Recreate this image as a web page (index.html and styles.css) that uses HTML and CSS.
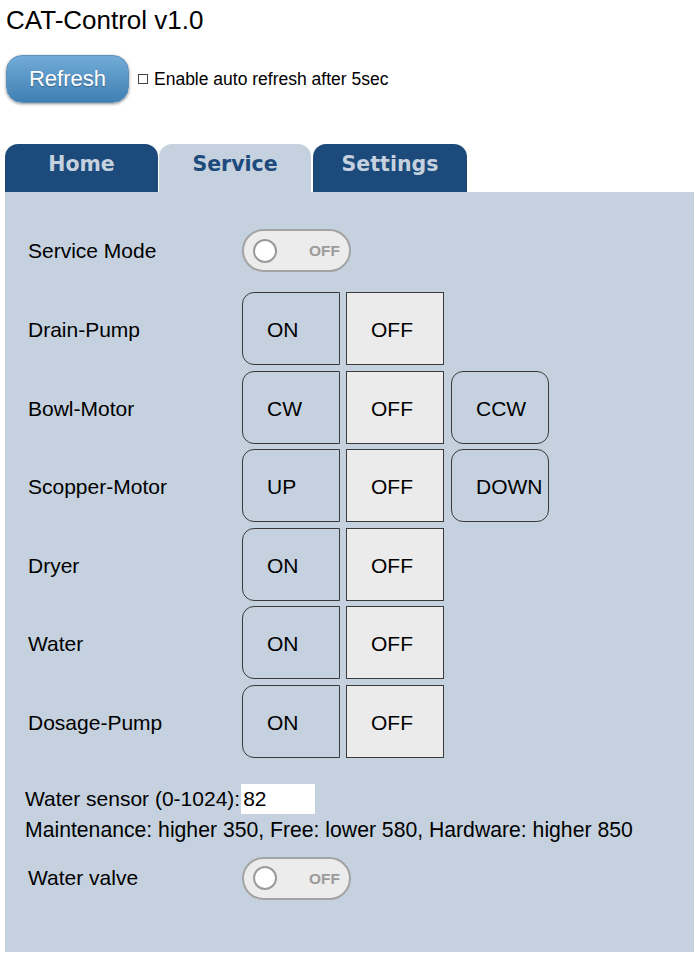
FILE: index.html
```html
<!DOCTYPE html>
<html>
<head>
<meta charset="utf-8">
<title>CAT-Control v1.0</title>
<link rel="stylesheet" href="styles.css">
</head>
<body>
<h1 class="title">CAT-Control v1.0</h1>
<div class="toolbar">
  <button class="refresh">Refresh</button>
  <label class="auto"><input type="checkbox" class="check">Enable auto refresh after 5sec</label>
</div>
<div class="tabs">
  <div class="tab tab-home">Home</div>
  <div class="tab tab-service active">Service</div>
  <div class="tab tab-settings">Settings</div>
</div>
<div class="panel">
  <div class="row toggle-row">
    <div class="label">Service Mode</div>
    <div class="toggle"><span class="knob"></span><span class="toggle-text">OFF</span></div>
  </div>
  <div class="grid">
    <div class="row btn-row">
      <div class="label">Drain-Pump</div>
      <div class="btn btn-first">ON</div>
      <div class="btn btn-off">OFF</div>
    </div>
    <div class="row btn-row">
      <div class="label">Bowl-Motor</div>
      <div class="btn btn-first">CW</div>
      <div class="btn btn-off">OFF</div>
      <div class="btn btn-last">CCW</div>
    </div>
    <div class="row btn-row">
      <div class="label">Scopper-Motor</div>
      <div class="btn btn-first">UP</div>
      <div class="btn btn-off">OFF</div>
      <div class="btn btn-last">DOWN</div>
    </div>
    <div class="row btn-row">
      <div class="label">Dryer</div>
      <div class="btn btn-first">ON</div>
      <div class="btn btn-off">OFF</div>
    </div>
    <div class="row btn-row">
      <div class="label">Water</div>
      <div class="btn btn-first">ON</div>
      <div class="btn btn-off">OFF</div>
    </div>
    <div class="row btn-row">
      <div class="label">Dosage-Pump</div>
      <div class="btn btn-first">ON</div>
      <div class="btn btn-off">OFF</div>
    </div>
  </div>
  <div class="sensor">
    <div class="sensor-line">Water sensor (0-1024):<input class="sensor-input" type="text" value="82"></div>
    <div class="sensor-info">Maintenance: higher 350, Free: lower 580, Hardware: higher 850</div>
  </div>
  <div class="row toggle-row valve-row">
    <div class="label">Water valve</div>
    <div class="toggle"><span class="knob"></span><span class="toggle-text">OFF</span></div>
  </div>
</div>
</body>
</html>
```

FILE: styles.css
```css
* { box-sizing: border-box; }
body {
  margin: 0;
  font-family: "Liberation Sans", Arial, sans-serif;
  color: #000;
  background: #fff;
}
.title {
  margin: 0;
  padding: 4px 0 0 6px;
  font-size: 26px;
  font-weight: normal;
  line-height: 32px;
}
.toolbar {
  display: flex;
  align-items: center;
  margin-top: 19px;
  padding-left: 6px;
}
.refresh {
  width: 123px;
  height: 48px;
  border: 1px solid #5f8fb8;
  border-radius: 16px;
  background: linear-gradient(#72acd8, #3f7fb3);
  color: #fff;
  font-family: "Liberation Sans", Arial, sans-serif;
  font-size: 22px;
  padding: 0;
  box-shadow: 0 1px 3px rgba(0,0,0,0.45);
  text-shadow: 0 1px 1px rgba(0,0,0,0.3);
}
.auto {
  display: flex;
  align-items: center;
  margin-left: 9px;
  font-size: 17.5px;
}
.check {
  -webkit-appearance: none;
  appearance: none;
  width: 10px;
  height: 10px;
  margin: 0 6px 0 0;
  border: 1px solid #444;
  background: #fff;
  border-radius: 0;
}
.tabs {
  display: flex;
  margin-top: 41px;
  padding-left: 5px;
}
.tab {
  height: 48px;
  border-radius: 13px 13px 0 0;
  background: #1b4a7b;
  color: #c5d1de;
  font-family: "DejaVu Sans", Verdana, sans-serif;
  font-weight: bold;
  font-size: 20.5px;
  text-align: center;
  line-height: 40px;
}
.tab-home { width: 153px; }
.tab-service { width: 152px; margin-left: 1px; }
.tab-settings { width: 154px; margin-left: 2px; }
.tab.active {
  background: #c5d1de;
  color: #1b4a7b;
}
.panel {
  margin: 0 5px;
  height: 760px;
  background: #c5d1de;
  padding-top: 37px;
}
.row {
  display: flex;
  align-items: center;
}
.label {
  width: 237px;
  padding-left: 23px;
  font-size: 21px;
}
.btn-row .label { padding-top: 3px; }
.toggle {
  position: relative;
  width: 109px;
  height: 43px;
  border: 2px solid #a3a3a3;
  border-radius: 22px;
  background: #ececec;
}
.knob {
  position: absolute;
  left: 9px;
  top: 7.5px;
  width: 24px;
  height: 24px;
  border: 2px solid #9a9a9a;
  border-radius: 50%;
  background: #fff;
}
.toggle-text {
  position: absolute;
  right: 9px;
  top: 0;
  line-height: 39px;
  font-size: 15.5px;
  font-weight: bold;
  color: #9b9b9b;
}
.grid {
  display: flex;
  flex-direction: column;
  gap: 5.6px;
  margin-top: 20px;
}
.btn-row { gap: 6px; }
.btn-row .label { width: 231px; }
.btn {
  width: 98px;
  height: 73px;
  border: 1px solid #3a3a3a;
  padding-left: 24px;
  font-size: 21px;
  line-height: 73px;
}
.btn-first { border-radius: 12px 0 0 12px; }
.btn-off { background: #ebebeb; }
.btn-last { border-radius: 12px; width: 98px; margin-left: 1px; }
.sensor {
  margin-top: 26px;
  padding-left: 20px;
  font-size: 21px;
}
.sensor-line {
  display: flex;
  align-items: center;
  height: 30px;
}
.sensor-input {
  width: 74px;
  height: 30px;
  margin-left: 1px;
  border: none;
  padding: 0 2px;
  font-family: "Liberation Sans", Arial, sans-serif;
  font-size: 21px;
  background: #fff;
  outline: none;
}
.sensor-info {
  margin-top: 2px;
  font-size: 21.2px;
  line-height: 28px;
}
.valve-row { margin-top: 13px; }
```
